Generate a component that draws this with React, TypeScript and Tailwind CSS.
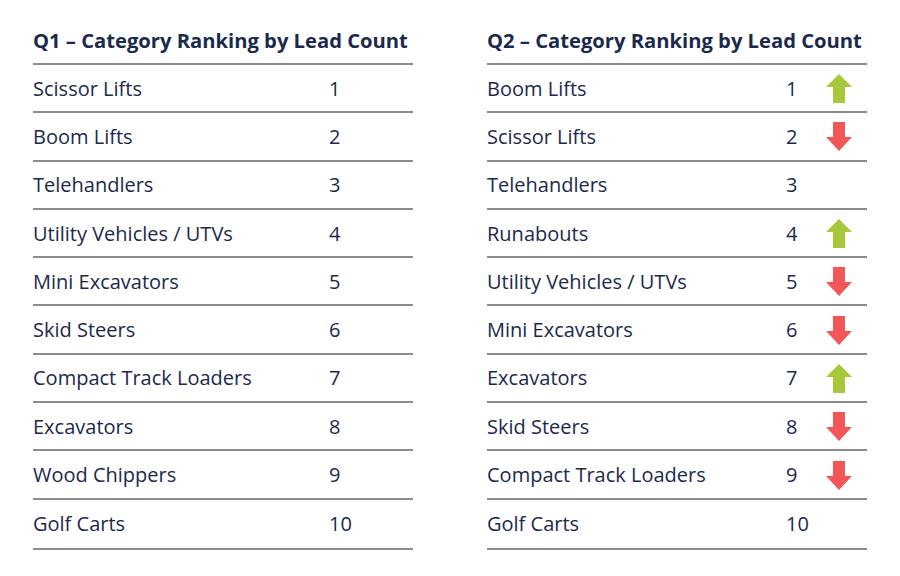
import React from "react"

type Trend = "up" | "down" | null

type Row = {
  name: string
  rank: number
  trend?: Trend
}

const q1: Row[] = [
  { name: "Scissor Lifts", rank: 1 },
  { name: "Boom Lifts", rank: 2 },
  { name: "Telehandlers", rank: 3 },
  { name: "Utility Vehicles / UTVs", rank: 4 },
  { name: "Mini Excavators", rank: 5 },
  { name: "Skid Steers", rank: 6 },
  { name: "Compact Track Loaders", rank: 7 },
  { name: "Excavators", rank: 8 },
  { name: "Wood Chippers", rank: 9 },
  { name: "Golf Carts", rank: 10 },
]

const q2: Row[] = [
  { name: "Boom Lifts", rank: 1, trend: "up" },
  { name: "Scissor Lifts", rank: 2, trend: "down" },
  { name: "Telehandlers", rank: 3, trend: null },
  { name: "Runabouts", rank: 4, trend: "up" },
  { name: "Utility Vehicles / UTVs", rank: 5, trend: "down" },
  { name: "Mini Excavators", rank: 6, trend: "down" },
  { name: "Excavators", rank: 7, trend: "up" },
  { name: "Skid Steers", rank: 8, trend: "down" },
  { name: "Compact Track Loaders", rank: 9, trend: "down" },
  { name: "Golf Carts", rank: 10, trend: null },
]

function Arrow({ trend }: { trend: Trend }) {
  if (trend === "up") {
    return (
      <svg width="26" height="29" viewBox="0 0 26 29">
        <polygon points="13,0 26,13 19,13 19,29 7,29 7,13 0,13" fill="#a6c83a" />
      </svg>
    )
  }
  if (trend === "down") {
    return (
      <svg width="26" height="29" viewBox="0 0 26 29">
        <polygon points="7,0 19,0 19,15 26,15 13,29 0,15 7,15" fill="#f25656" />
      </svg>
    )
  }
  return null
}

function RankTable({
  title,
  rows,
  numCol,
  showTrend,
}: {
  title: string
  rows: Row[]
  numCol: string
  showTrend?: boolean
}) {
  return (
    <div className="w-[380px]">
      <div className="h-[38px] border-b-2 border-[#8c8c8c] text-[20.2px] font-bold leading-[26px] text-[#1b2a4c]">
        {title}
      </div>
      {rows.map((r, i) => (
        <div
          key={r.name}
          className={`flex items-center border-b-2 border-[#8c8c8c] pt-px text-[20px] text-[#1b2a4c] ${
            i === rows.length - 1 ? "h-[50px]" : "h-[48.3px]"
          }`}
        >
          <div className={numCol}>{r.name}</div>
          <div className="w-[40px]">{r.rank}</div>
          {showTrend && (
            <div className="flex w-[26px] items-center justify-center">
              <Arrow trend={r.trend ?? null} />
            </div>
          )}
        </div>
      ))}
    </div>
  )
}

export default function App() {
  return (
    <div
      className="h-[576px] w-[900px] bg-white pl-[33px] pt-[27px]"
      style={{ fontFamily: '"Open Sans", "Noto Sans", sans-serif' }}
    >
      <div className="flex gap-[74px]">
        <RankTable
          title="Q1 – Category Ranking by Lead Count"
          rows={q1}
          numCol="w-[296px]"
        />
        <RankTable
          title="Q2 – Category Ranking by Lead Count"
          rows={q2}
          numCol="w-[299px]"
          showTrend
        />
      </div>
    </div>
  )
}
